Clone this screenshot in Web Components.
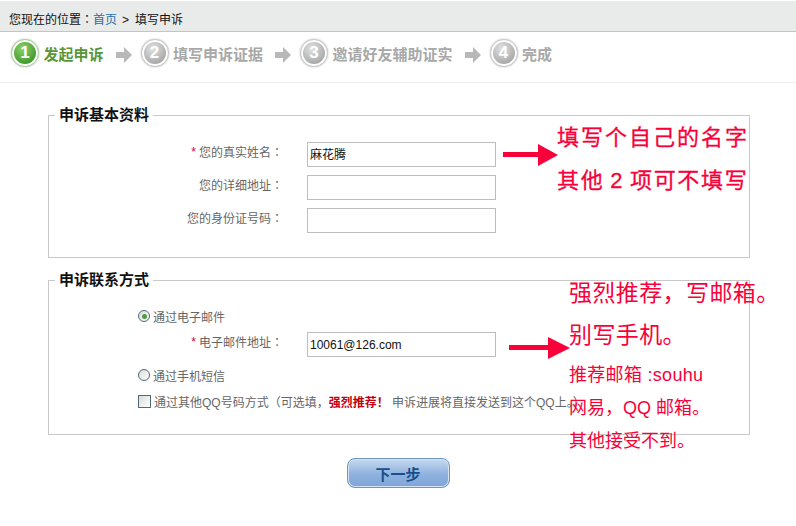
<!DOCTYPE html>
<html lang="zh-CN">
<head>
<meta charset="utf-8">
<title>填写申诉</title>
<style>
    html, body {
        margin: 0;
        background: #fff;
    }
    body {
        width: 796px;
        height: 526px;
        overflow: hidden;
        position: relative;
        font-family: "Liberation Sans", "Noto Sans CJK SC", sans-serif;
        font-size: 12px;
        color: #666;
    }
    .colon { font-family: "Noto Sans CJK TC", sans-serif; }
    .sep { margin: 0 6px 0 5px; }
    .pick { color: #c00010; font-weight: bold; }
</style>
</head>
<body>
    <crumb-bar>您现在的位置<span class="colon" lang="zh-TW">：</span><a-link>首页</a-link><span class="sep">&gt;</span>填写申诉</crumb-bar>

    <step-bar>
        <step-item num="1" active>发起申诉</step-item>
        <step-item num="2" arrow>填写申诉证据</step-item>
        <step-item num="3" arrow>邀请好友辅助证实</step-item>
        <step-item num="4" arrow>完成</step-item>
    </step-bar>

    <form-section heading="申诉基本资料" style="margin-top:22px">
        <form-row required label="您的真实姓名">麻花腾</form-row>
        <form-row label="您的详细地址"></form-row>
        <form-row label="您的身份证号码"></form-row>
    </form-section>

    <form-section heading="申诉联系方式" style="margin-top:12px" compact>
        <form-option type="radio" checked>通过电子邮件</form-option>
        <form-row required label="电子邮件地址">10061@126.com</form-row>
        <form-option type="radio">通过手机短信</form-option>
        <form-option type="check">通过其他QQ号码方式（可选填，<span class="pick">强烈推荐！</span> 申诉进展将直接发送到这个QQ上。）</form-option>
    </form-section>

    <next-button>下一步</next-button>

    <red-arrow style="left:503px;top:143px;--shaft:35px;--head:20px"></red-arrow>
    <red-arrow style="left:509px;top:336px;--shaft:39px;--head:22px"></red-arrow>

    <red-note style="left:557px;top:116px;--stroke:0.3px">
        <note-line size="22" pitch="43" track="2">填写个自己的名字</note-line>
        <note-line size="22" pitch="43" track="1.7" style="word-spacing:-2px">其他 2 项可不填写</note-line>
    </red-note>
    <red-note style="left:569px;top:272px">
        <note-line size="23" pitch="42" track="0.4">强烈推荐，写邮箱。</note-line>
        <note-line size="23" pitch="42" track="0.4">别写手机。</note-line>
        <note-line size="18" pitch="33" track="0.3" style="margin-top:3px">推荐邮箱 :souhu</note-line>
        <note-line size="18" pitch="33" track="0">网易，QQ 邮箱。</note-line>
        <note-line size="18" pitch="33" track="0">其他接受不到。</note-line>
    </red-note>

<script>
// breadcrumb strip at the top of the page
const crumbTemplate = document.createElement("template");
crumbTemplate.innerHTML = `
    <style>
        :host {
            display: block;
            margin-top: 1px;
            height: 31px;
            line-height: 35px;
            padding-left: 9px;
            box-sizing: border-box;
            background: #e9eaea;
            border-bottom: 1px solid #c4c4c4;
            color: #111;
        }
        ::slotted(a-link) { color: #1f6fa8; }
    </style>
    <slot></slot>
`;
class CrumbBar extends HTMLElement {
    constructor() {
        super();
        this.attachShadow({ mode: "open" }).append(crumbTemplate.content.cloneNode(true));
    }
}

// row of wizard steps
const stepBarTemplate = document.createElement("template");
stepBarTemplate.innerHTML = `
    <style>
        :host {
            display: flex;
            align-items: center;
            height: 51px;
            padding-left: 11px;
            padding-bottom: 5px;
            box-sizing: border-box;
            border-bottom: 1px solid #efefef;
        }
    </style>
    <slot></slot>
`;
class StepBar extends HTMLElement {
    constructor() {
        super();
        this.attachShadow({ mode: "open" }).append(stepBarTemplate.content.cloneNode(true));
    }
}

const stepTemplate = document.createElement("template");
stepTemplate.innerHTML = `
    <style>
        :host {
            display: flex;
            align-items: center;
            color: #a8a8a8;
        }
        :host([active]) { color: #5a9638; }
        svg.next {
            display: none;
            width: 17px;
            height: 16px;
            margin: 0 9px 0 11px;
        }
        :host([arrow]) svg.next { display: block; }
        .ring {
            width: 28px;
            height: 28px;
            margin-top: -4px;
            box-sizing: border-box;
            border-radius: 50%;
            background: #fff;
            border: 1px solid #c8c8c8;
            padding: 2px;
            box-shadow: 0 0 2px #bbb;
        }
        :host([active]) .ring { border-color: #a8cf98; }
        .disc {
            display: block;
            height: 100%;
            border-radius: 50%;
            text-align: center;
            line-height: 21px;
            font-size: 17px;
            font-weight: bold;
            color: #fff;
            background: radial-gradient(circle at 40% 30%, #e2e2e2, #a9a9a9 75%);
        }
        :host([active]) .disc {
            background: radial-gradient(circle at 40% 30%, #8fd06a, #3f9a2c 75%);
        }
        .label {
            margin-left: 4.5px;
            font-size: 15px;
            font-weight: bold;
            white-space: nowrap;
            line-height: 20px;
        }
    </style>
    <svg class="next" viewBox="0 0 17 16"><path d="M1 5h8V0l8 8-8 8v-5H1z" fill="#b8b8b8"/></svg>
    <div class="ring"><span class="disc"></span></div>
    <div class="label"><slot></slot></div>
`;
class StepItem extends HTMLElement {
    constructor() {
        super();
        const shadow = this.attachShadow({ mode: "open" });
        shadow.append(stepTemplate.content.cloneNode(true));
        shadow.querySelector(".disc").textContent = this.getAttribute("num");
    }
}

// bordered group with a legend
const sectionTemplate = document.createElement("template");
sectionTemplate.innerHTML = `
    <style>
        :host {
            display: block;
            width: 702px;
            margin-left: 48px;
        }
        fieldset {
            margin: 0;
            padding: 17px 0 24px;
            border: 1px solid #c9c9c9;
            min-width: 0;
        }
        :host([compact]) fieldset { padding: 16px 0 23px; }
        legend {
            margin-left: 6px;
            padding: 0 4px;
            height: 20px;
            line-height: 20px;
            font-size: 15px;
            font-weight: bold;
            color: #111;
        }
        .rows {
            display: flex;
            flex-direction: column;
        }
    </style>
    <fieldset>
        <legend></legend>
        <div class="rows"><slot></slot></div>
    </fieldset>
`;
class FormSection extends HTMLElement {
    constructor() {
        super();
        const shadow = this.attachShadow({ mode: "open" });
        shadow.append(sectionTemplate.content.cloneNode(true));
        shadow.querySelector("legend").textContent = this.getAttribute("heading");
    }
}

// label and text box
const rowTemplate = document.createElement("template");
rowTemplate.innerHTML = `
    <style>
        :host {
            display: grid;
            grid-template-columns: 234px 189px;
            column-gap: 24px;
            align-items: center;
            margin-bottom: 8px;
        }
        :host(:last-child) { margin-bottom: 0; }
        .label {
            display: flex;
            justify-content: flex-end;
            gap: 3px;
            line-height: 20px;
            margin-top: -4px;
        }
        .star {
            display: none;
            color: #d40030;
        }
        :host([required]) .star { display: inline; }
        .colon {
            font-family: "Noto Sans CJK TC", sans-serif;
        }
        .box {
            height: 25px;
            box-sizing: border-box;
            border: 1px solid #bdbdbd;
            padding-left: 2px;
            line-height: 24px;
            color: #111;
            white-space: nowrap;
        }
    </style>
    <div class="label"><span class="star">*</span><span><span class="text"></span><span class="colon" lang="zh-TW">：</span></span></div>
    <div class="box"><slot></slot></div>
`;
class FormRow extends HTMLElement {
    constructor() {
        super();
        const shadow = this.attachShadow({ mode: "open" });
        shadow.append(rowTemplate.content.cloneNode(true));
        shadow.querySelector(".text").textContent = this.getAttribute("label");
    }
}

// radio or checkbox line
const optionTemplate = document.createElement("template");
optionTemplate.innerHTML = `
    <style>
        :host {
            display: flex;
            align-items: center;
            gap: 3px;
            height: 20px;
            padding-left: 89px;
            white-space: nowrap;
            margin-bottom: 6px;
        }
        :host(:last-child) { margin-bottom: 0; }
        .mark {
            flex: none;
            width: 12px;
            height: 12px;
            box-sizing: border-box;
            border: 1px solid #4f6a78;
            background: linear-gradient(135deg, #d8dcd8, #fff);
            display: flex;
            align-items: center;
            justify-content: center;
        }
        :host([type="radio"]) .mark { border-radius: 50%; }
        :host([type="check"]) .mark { width: 13px; height: 13px; }
        .dot {
            display: none;
            width: 5px;
            height: 5px;
            border-radius: 50%;
            background: #4f9a45;
        }
        :host([checked]) .dot { display: block; }
    </style>
    <span class="mark"><span class="dot"></span></span>
    <span><slot></slot></span>
`;
class FormOption extends HTMLElement {
    constructor() {
        super();
        this.attachShadow({ mode: "open" }).append(optionTemplate.content.cloneNode(true));
    }
}

const buttonTemplate = document.createElement("template");
buttonTemplate.innerHTML = `
    <style>
        :host {
            display: flex;
            justify-content: center;
            margin-top: 23px;
        }
        button {
            width: 103px;
            height: 30px;
            padding: 0;
            border: 1px solid #6f96bd;
            border-radius: 8px;
            background: linear-gradient(#c6d9ef, #8fb2de 55%, #7ea5d8);
            box-shadow: inset 0 0 0 1px #d5e2f2;
            color: #174f8e;
            font: bold 15px "Liberation Sans", "Noto Sans CJK SC", sans-serif;
        }
    </style>
    <button type="button"><slot></slot></button>
`;
class NextButton extends HTMLElement {
    constructor() {
        super();
        this.attachShadow({ mode: "open" }).append(buttonTemplate.content.cloneNode(true));
    }
}

// hand drawn annotations lying over the form
const arrowTemplate = document.createElement("template");
arrowTemplate.innerHTML = `
    <style>
        :host {
            position: absolute;
            display: flex;
            align-items: center;
            height: 23px;
        }
        .shaft {
            width: var(--shaft);
            height: 5px;
            background: #f8003a;
        }
        .head {
            width: 0;
            height: 0;
            border-left: var(--head) solid #f8003a;
            border-top: 11.5px solid transparent;
            border-bottom: 11.5px solid transparent;
        }
    </style>
    <div class="shaft"></div>
    <div class="head"></div>
`;
class RedArrow extends HTMLElement {
    constructor() {
        super();
        this.attachShadow({ mode: "open" }).append(arrowTemplate.content.cloneNode(true));
    }
}

const noteTemplate = document.createElement("template");
noteTemplate.innerHTML = `
    <style>
        :host {
            position: absolute;
            display: flex;
            flex-direction: column;
            color: #f8003a;
            white-space: nowrap;
            -webkit-text-stroke: var(--stroke, 0) #f8003a;
        }
    </style>
    <slot></slot>
`;
class RedNote extends HTMLElement {
    constructor() {
        super();
        this.attachShadow({ mode: "open" }).append(noteTemplate.content.cloneNode(true));
    }
}

const lineTemplate = document.createElement("template");
lineTemplate.innerHTML = `
    <style>
        :host {
            display: block;
            font-size: var(--size);
            line-height: var(--pitch);
            letter-spacing: var(--track);
        }
    </style>
    <slot></slot>
`;
class NoteLine extends HTMLElement {
    constructor() {
        super();
        this.style.setProperty("--size", this.getAttribute("size") + "px");
        this.style.setProperty("--pitch", this.getAttribute("pitch") + "px");
        this.style.setProperty("--track", this.getAttribute("track") + "px");
        this.attachShadow({ mode: "open" }).append(lineTemplate.content.cloneNode(true));
    }
}

customElements.define("crumb-bar", CrumbBar);
customElements.define("step-bar", StepBar);
customElements.define("step-item", StepItem);
customElements.define("form-section", FormSection);
customElements.define("form-row", FormRow);
customElements.define("form-option", FormOption);
customElements.define("next-button", NextButton);
customElements.define("red-arrow", RedArrow);
customElements.define("red-note", RedNote);
customElements.define("note-line", NoteLine);
</script>
</body>
</html>
